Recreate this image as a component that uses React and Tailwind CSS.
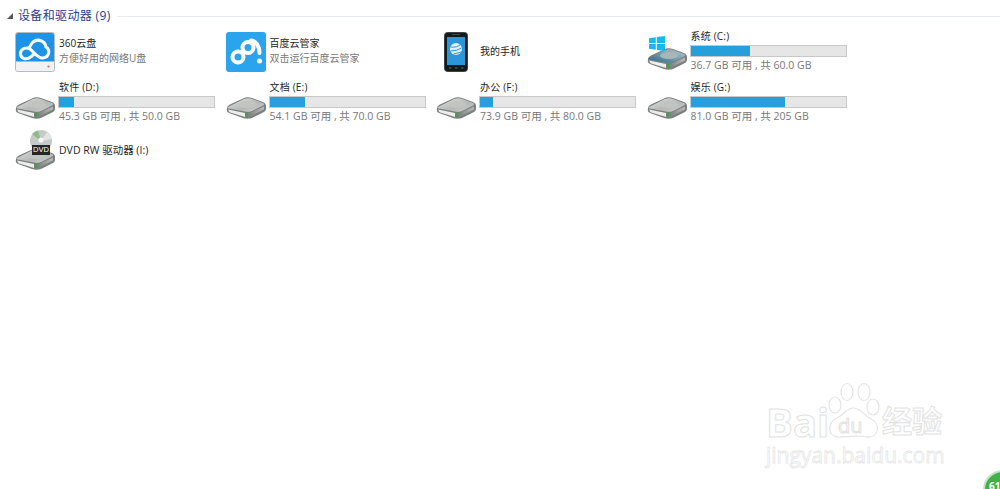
import React from 'react';

// grey hard disk, shared by every drive tile
const DiskIcon = ({ dark }) => (
  <svg width="40" height="22" viewBox="0 0 40 22">
    <defs>
      <linearGradient id="hddTop" x1="0" y1="0" x2="1" y2="1">
        <stop offset="0" stopColor="#e2e4e2" />
        <stop offset="0.6" stopColor="#b4b7b5" />
        <stop offset="1" stopColor="#d6d8d6" />
      </linearGradient>
      <linearGradient id="hddBlue" x1="0" y1="1" x2="1" y2="0">
        <stop offset="0" stopColor="#1f6785" />
        <stop offset="0.6" stopColor="#7fa6b4" />
        <stop offset="1" stopColor="#c4c7c6" />
      </linearGradient>
      <linearGradient id="hddRight" x1="0" y1="0" x2="1" y2="0">
        <stop offset="0" stopColor="#7d817f" />
        <stop offset="1" stopColor="#b8bbb9" />
      </linearGradient>
    </defs>
    <path d="M1 11 C1 9 3 8 5 7 L17 1.5 C20 0 23 0 26 1 L37 5 C39 6 40 7 40 9 L40 12 C40 14 38 15 36 16 L27 20.5 C24 22 20 22 17 21 L3 16 C1 15 0.5 14 1 11 Z" fill="#7b7f7d" />
    <path d="M2 10 L18 2 C21 1 24 1 26 2 L37 6 C39 7 38 8 36 9 L26 14 C23 15 21 15 19 14.5 L3 11.5 C1.5 11 1 10.5 2 10 Z" fill={dark ? 'url(#hddBlue)' : 'url(#hddTop)'} />
    <ellipse cx="22" cy="7.5" rx="9" ry="3.6" fill={dark ? '#a9b6ba' : '#c2c4c2'} />
    <path d="M2 12.5 L19 16 L19 20 L3.5 15.2 Z" fill="#eceeec" />
    <path d="M23 16 L38 9.5 L38 12.5 L23 20 Z" fill="url(#hddRight)" />
    <rect x="20.2" y="15.8" width="1.8" height="4" fill="#35a83a" />
  </svg>
);

const Cloud360 = () => (
  <svg width="40" height="40" viewBox="0 0 40 40">
    <rect x="0.5" y="0.5" width="39" height="39" rx="2" fill="#f1f2f3" stroke="#b5bcc0" />
    <path d="M1 3 Q1 1 3 1 H37 Q39 1 39 3 V29.5 H1 Z" fill="#1e93e6" />
    <path d="M14 26 C10 28 5 26 5.5 21 C6 16 12 15 15 17 C19 20 23 27 28 26 C34 25 36 18 31 15 C30 9 23 6 18 10 C16 12 15.5 14 14 16" fill="none" stroke="#fff" strokeWidth="3" strokeLinecap="round" />
    <path d="M14 26 C16 25 17.5 24 19 22" fill="none" stroke="#fff" strokeWidth="3" strokeLinecap="round" />
    <circle cx="33.5" cy="34.5" r="1.1" fill="#d9663f" />
  </svg>
);

const BaiduCloud = () => (
  <svg width="40" height="40" viewBox="0 0 40 40">
    <rect width="40" height="40" rx="3" fill="#2ba4ee" />
    <circle cx="12" cy="25" r="5.5" fill="none" stroke="#fff" strokeWidth="4" />
    <circle cx="22" cy="15.5" r="5.5" fill="none" stroke="#fff" strokeWidth="4" />
    <path d="M15.5 21.5 L18.5 19" stroke="#fff" strokeWidth="6" />
    <path d="M25 8.5 C30 9 33.5 14 33.5 21" fill="none" stroke="#fff" strokeWidth="4" strokeLinecap="round" />
    <circle cx="33.5" cy="29" r="2.5" fill="#fff" />
  </svg>
);

const Phone = () => (
  <svg width="24" height="40" viewBox="0 0 24 40">
    <rect x="0.5" y="0.5" width="23" height="39" rx="3" fill="#14181b" stroke="#3c4246" />
    <rect x="3" y="5" width="18" height="28" fill="#2b97d8" />
    <circle cx="12" cy="17" r="6" fill="#dff0fa" />
    <path d="M6.5 15 Q13 16 17 12 M6.5 19 Q13 19 17.5 16 M9.5 22 Q14 21 17 20" stroke="#2b97d8" strokeWidth="1" fill="none" />
    <rect x="8" y="2.2" width="8" height="0.8" fill="#555" />
    <rect x="5" y="35.5" width="2.5" height="1" fill="#666" />
    <rect x="11" y="35.5" width="2.5" height="1" fill="#666" />
    <rect x="17" y="35.5" width="2.5" height="1" fill="#666" />
  </svg>
);

const WinFlag = () => (
  <svg className="absolute left-[3px] top-[5px]" width="16" height="15" viewBox="0 0 16 15">
    <path d="M0 2.2 L6.8 1.2 V7 H0 Z M7.8 1 L16 0 V7 H7.8 Z M0 8 H6.8 V13.8 L0 12.8 Z M7.8 8 H16 V15 L7.8 14 Z" fill="#19b9ee" />
  </svg>
);

const DvdIcon = () => (
  <div className="relative w-[40px] h-[40px]">
    <svg className="absolute left-[15px] top-0" width="22" height="22" viewBox="0 0 22 22">
      <circle cx="11" cy="11" r="11" fill="#c6cac6" />
      <path d="M11 11 L2 4 A11 11 0 0 1 8 0.5 Z" fill="#8fb98a" />
      <path d="M11 11 L22 9 A11 11 0 0 0 17 2 Z" fill="#e2e4e2" />
      <circle cx="11" cy="10" r="2.6" fill="#f4f4f4" />
    </svg>
    <div className="absolute left-0 bottom-0"><DiskIcon /></div>
    <div className="absolute left-[17px] top-[15px] w-[18px] h-[10px] bg-[#262626] text-white text-[7.5px] leading-[10px] text-center font-['Liberation_Sans',sans-serif]">DVD</div>
  </div>
);

const Tile = ({ icon, title, sub, height = 'h-[42px]', iconClass = 'pl-[1px]', titleClass = 'text-[10px]', textClass = 'pb-[2px]' }) => (
  <div className={`flex items-center ${height}`}>
    <div className={`w-[44px] flex shrink-0 ${iconClass}`}>{icon}</div>
    <div className={`ml-[1px] ${textClass}`}>
      <div className={`${titleClass} leading-[15px] text-[#1e1e1e]`}>{title}</div>
      {sub && <div className="text-[10px] leading-[15px] text-[#777]">{sub}</div>}
    </div>
  </div>
);

const Drive = ({ title, used, free, total, flag }) => (
  <div className="flex h-[42px]">
    <div className={`relative w-[44px] shrink-0 pl-[1px] ${flag ? 'pt-[17px]' : 'pt-[15px]'}`}>
      {flag && <WinFlag />}
      <DiskIcon dark={flag} />
    </div>
    <div className="w-[157px]">
      <div className="-mt-[2px] mb-[2px] text-[10px] leading-[14px] text-[#1e1e1e] pl-[1px] tracking-[0.2px]">{title}</div>
      <div className="h-[12px] border border-[#c8c8c8] bg-[#e6e6e6]">
        <div className="h-full bg-[#26a0da]" style={{ width: used + '%' }} />
      </div>
      <div className="mt-[1px] text-[10.5px] leading-[15px] text-[#777] pl-[1px] whitespace-nowrap">{free} GB 可用 , 共 {total}</div>
    </div>
  </div>
);

const Watermark = () => (
  <div className="absolute left-[765px] top-[380px] w-[200px] h-[90px]">
    <svg className="absolute left-0 top-0" width="150" height="70" viewBox="0 0 150 70" fill="none" stroke="#e4e4e4" strokeWidth="1.2">
      <ellipse cx="70" cy="25" rx="6" ry="8" />
      <ellipse cx="82" cy="12" rx="6" ry="8.5" />
      <ellipse cx="99" cy="12" rx="6" ry="8.5" />
      <ellipse cx="108" cy="27" rx="6" ry="8" />
      <path d="M88 28 C82 28 80 34 72 38 C62 43 62 57 74 57 C82 57 94 55 102 57 C114 58 116 44 106 39 C98 35 96 28 88 28 Z" fill="#fff" />
    </svg>
    <div className="absolute left-[1px] top-[22px] text-[40px] leading-[40px] font-bold text-white [-webkit-text-stroke:1px_#e2e2e2]">Bai</div>
    <div className="absolute left-[73px] top-[36px] text-[20px] leading-[20px] text-white [-webkit-text-stroke:1px_#e2e2e2]">du</div>
    <div className="absolute left-[117px] top-[26px] text-[30px] leading-[30px] font-bold text-white [-webkit-text-stroke:1px_#e2e2e2]">经验</div>
    <div className="absolute left-[1px] top-[63px] text-[21px] leading-[24px] text-white whitespace-nowrap [-webkit-text-stroke:0.8px_#e6e6e6]">jingyan.baidu.com</div>
  </div>
);

export default function App() {
  return (
    <div className="relative w-[1000px] h-[489px] overflow-hidden bg-white font-['Open_Sans','Noto_Sans_CJK_SC',sans-serif]">
      {/* group header */}
      <div className="flex items-center h-[16px] mt-[8px] pl-[7px]">
        <svg width="6" height="6" viewBox="0 0 6 6"><path d="M0 6 H6 V0 Z" fill="#555" /></svg>
        <span className="ml-[5px] text-[12px] leading-[16px] text-[#2a3c8c] tracking-[0.35px]">设备和驱动器 (9)</span>
        <div className="flex-1 h-px bg-[#e6e9ee] ml-[6px]" />
      </div>

      <div className="grid grid-cols-[210.5px_210.5px_210.5px_210.5px] gap-y-[9px] pl-[14px] mt-[7px]">
        <Tile icon={<Cloud360 />} title="360云盘" sub="方便好用的网络U盘" />
        <Tile icon={<BaiduCloud />} title="百度云管家" sub="双击运行百度云管家" />
        <Tile icon={<Phone />} title="我的手机" iconClass="pl-[9px]" />
        <Drive title="系统 (C:)" used={38.5} free="36.7" total="60.0 GB" flag />

        <Drive title="软件 (D:)" used={9.5} free="45.3" total="50.0 GB" />
        <Drive title="文档 (E:)" used={23} free="54.1" total="70.0 GB" />
        <Drive title="办公 (F:)" used={8.5} free="73.9" total="80.0 GB" />
        <Drive title="娱乐 (G:)" used={61} free="81.0" total="205 GB" />

        <Tile icon={<DvdIcon />} title="DVD RW 驱动器 (I:)" height="h-[34px]" titleClass="text-[10.5px]" textClass="pb-0" />
      </div>

      <Watermark />

      {/* corner badge */}
      <div className="absolute left-[983px] top-[470px] w-[40px] h-[40px] rounded-full border-2 border-[#bfe3bf] bg-[#3fb24a] text-white text-[10px] leading-[12px] font-bold pl-[4px] pt-[8px]">61</div>
    </div>
  );
}
